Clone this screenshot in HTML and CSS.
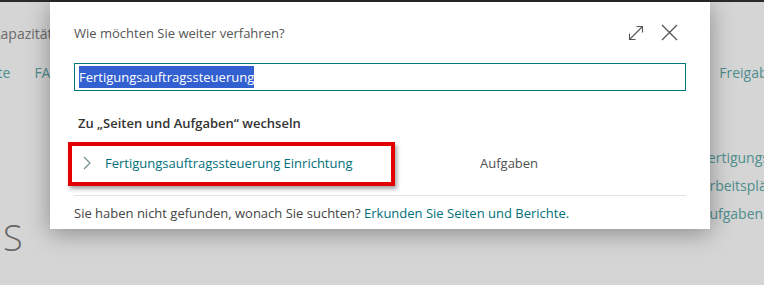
FILE: index.html
```html
<!doctype html>
<html lang="de">
  <head>
    <meta charset="UTF-8" />
    <meta name="viewport" content="width=device-width, initial-scale=1" />
    <title>Wie möchten Sie weiter verfahren?</title>
    <link rel="stylesheet" href="styles.css">
  </head>
  <body>
    <div class="topbar"></div>

    <!-- Seite im Hintergrund -->
    <div class="page">
      <div class="page-title">Kapazitäten</div>
      <div class="page-actions">
        <span class="action first">Liste</span>
        <span class="action">FA-Planung</span>
        <span class="spacer"></span>
        <span class="action last">Freigaben</span>
      </div>
      <div class="page-body">
        <div class="big-letter">S</div>
        <div class="side-links">
          <span>Fertigungsaufträge</span>
          <span>Arbeitsplätze</span>
          <span>Aufgaben</span>
        </div>
      </div>
    </div>

    <!-- Dialog -->
    <div class="dialog">
      <div class="dialog-header">
        <span class="dialog-title">Wie möchten Sie weiter verfahren?</span>
        <div class="dialog-icons">
          <svg width="16" height="16" viewBox="0 0 16 16" fill="none" stroke="#555" stroke-width="1.1">
            <path d="M1.5 14.5 L14.5 1.5" />
            <path d="M8.5 1.5 H14.5 V7.5" />
            <path d="M1.5 8.5 V14.5 H7.5" />
          </svg>
          <svg width="17" height="17" viewBox="0 0 17 17" fill="none" stroke="#555" stroke-width="1.3">
            <path d="M1 1 L16 16 M16 1 L1 16" />
          </svg>
        </div>
      </div>

      <div class="search-box">
        <span class="selected">Fertigungsauftragssteuerung</span>
      </div>

      <div class="section-title">Zu „Seiten und Aufgaben“ wechseln</div>

      <div class="result-row">
        <div class="result-name">
          <svg width="8" height="14" viewBox="0 0 8 14" fill="none" stroke="#6a8a8c" stroke-width="1.1">
            <path d="M1 1 L7 7 L1 13" />
          </svg>
          <span class="link">Fertigungsauftragssteuerung Einrichtung</span>
        </div>
        <span class="result-type">Aufgaben</span>
        <div class="highlight"></div>
      </div>

      <div class="dialog-footer">
        Sie haben nicht gefunden, wonach Sie suchten?
        <span class="link">Erkunden Sie Seiten und Berichte.</span>
      </div>
    </div>
  </body>
</html>
```

FILE: styles.css
```css
body {
  margin: 0;
  width: 764px;
  height: 285px;
  overflow: hidden;
  position: relative;
  background: #d5d5d5;
  font-family: "Open Sans", "Noto Sans", Arial, sans-serif;
  color: #505050;
}
.topbar {
  height: 2px;
  background: #2a2a2a;
}
.page {
  color: #6a6a6a;
}
.page-title {
  margin-top: 22px;
  margin-left: -8px;
  font-size: 14px;
  line-height: 20px;
}
.page-actions {
  display: flex;
  margin-top: 19px;
  font-size: 14px;
  line-height: 20px;
  color: #4f8e8e;
}
.action.first {
  margin-left: -20px;
  margin-right: 24px;
}
.spacer {
  flex: 1;
}
.action.last {
  margin-right: -20px;
}
.page-body {
  display: flex;
  align-items: flex-start;
  justify-content: space-between;
  margin-top: 64px;
}
.big-letter {
  margin-top: 70px;
  margin-left: 3px;
  font-size: 36px;
  font-weight: 300;
  line-height: 42px;
  color: #666;
}
.side-links {
  display: flex;
  flex-direction: column;
  gap: 7px;
  margin-right: -60px;
  font-size: 14px;
  line-height: 21px;
  color: #4f8e8e;
}

.dialog {
  position: absolute;
  left: 50px;
  top: 2px;
  width: 612px;
  height: 227px;
  padding: 0 24px;
  background: #fff;
  box-shadow: 0 4px 22px rgba(0, 0, 0, 0.35);
}
.dialog-header {
  display: flex;
  align-items: center;
  justify-content: space-between;
  height: 61px;
}
.dialog-title {
  font-size: 13px;
  color: #555;
  margin-top: 1px;
}
.dialog-icons {
  display: flex;
  align-items: center;
  gap: 17px;
  margin-right: 8px;
}
.search-box {
  height: 26px;
  border: 1px solid #00787e;
  padding: 0 4px;
  display: flex;
  align-items: center;
  font-size: 13px;
}
.selected {
  background: #3360d0;
  color: #fff;
  line-height: 22px;
}
.section-title {
  margin-top: 23px;
  margin-left: 4px;
  font-size: 13px;
  font-weight: 600;
  color: #333;
  line-height: 18px;
}
.result-row {
  position: relative;
  display: flex;
  align-items: center;
  height: 40px;
  margin-top: 11px;
  padding-bottom: 12px;
  border-bottom: 1px solid #e3e3e3;
  font-size: 13px;
}
.result-name {
  display: flex;
  align-items: center;
  gap: 14px;
  width: 397px;
  padding-left: 9px;
}
.link {
  color: #00707a;
}
.result-type {
  color: #505050;
}
.highlight {
  position: absolute;
  left: -6px;
  top: -1px;
  width: 319px;
  height: 36px;
  border: 4px solid #e30000;
  box-shadow: 2px 3px 4px rgba(0, 0, 0, 0.35);
}
.dialog-footer {
  margin-top: 8px;
  font-size: 13px;
  line-height: 18px;
  color: #444;
}
```
